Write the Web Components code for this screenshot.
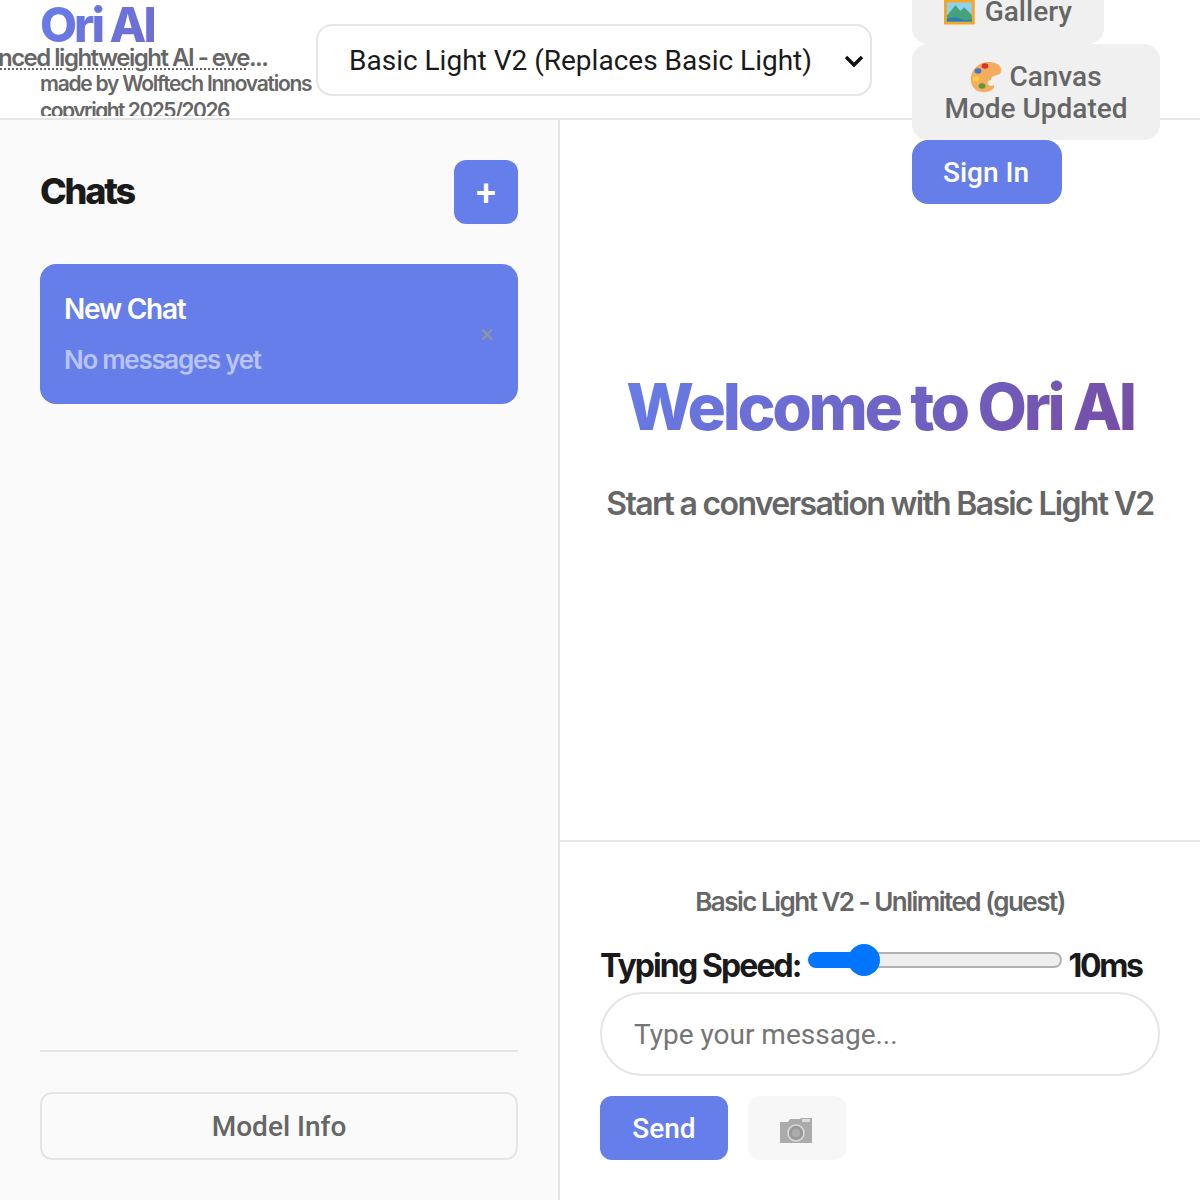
<!DOCTYPE html>
<html lang="en">
<head>
<meta charset="utf-8">
<title>Ori AI</title>
<style>
  html, body { margin: 0; height: 100%; overflow: hidden; background: #fff; }
  body { font-family: Roboto, "Liberation Sans", sans-serif; color: #1a1a1a; }
</style>
</head>
<body>
<ori-app>
  <ori-header slot="header"></ori-header>
  <ori-sidebar slot="sidebar"></ori-sidebar>
  <ori-chat slot="chat"></ori-chat>
</ori-app>

<script>
const headingFont = `Inter, "Liberation Sans", sans-serif`;
const uiFont = `Roboto, "Liberation Sans", sans-serif`;

const galleryIcon = `<svg width="32" height="26" viewBox="0 0 32 26" aria-hidden="true">
  <rect width="32" height="26" fill="#f5a623"/><rect x="3" y="3" width="26" height="20" fill="#8fd0ea"/>
  <path d="M3 17 L12 6 L17 12 L21 8 L29 16 V23 H3Z" fill="#45a27a"/>
  <path d="M3 20 Q12 17 17 20 T29 20 V23 H3Z" fill="#2f7fb5"/></svg>`;
const paletteIcon = `<svg width="32" height="32" viewBox="0 0 32 32" aria-hidden="true">
  <path d="M17 1 C27 0 33 6 31 11 C29 16 22 13 21 18 C20 23 27 24 23 28 C19 32 8 33 3 26 C-2 19 1 3 17 1Z" fill="#f4ad5f"/>
  <ellipse cx="15" cy="5" rx="3.4" ry="2.8" fill="#d8342c"/><ellipse cx="8" cy="10" rx="3.4" ry="2.8" fill="#3b78c9"/>
  <ellipse cx="6" cy="18" rx="3" ry="2.8" fill="#f7d23e"/><ellipse cx="12" cy="25" rx="3.4" ry="2.8" fill="#5a9a3c"/>
  <ellipse cx="21" cy="22" rx="3.4" ry="2.8" fill="#fbf3e2"/></svg>`;
const cameraIcon = `<svg width="32" height="26" viewBox="0 0 32 26" aria-hidden="true">
  <path d="M0 4 H8 L10 1 H20 L21 0 H32 V25 H0Z" fill="#ababab"/><rect x="22" y="1" width="8" height="3" fill="#dadada"/>
  <circle cx="16" cy="15" r="8" fill="#999" stroke="#d8d8d8" stroke-width="1.6"/><circle cx="16" cy="15" r="4" fill="#adadad"/></svg>`;
const selectArrow = `url("data:image/svg+xml,%3Csvg xmlns='http://www.w3.org/2000/svg' width='20' height='12' viewBox='0 0 20 12'%3E%3Cpath d='M2 2l8 8 8-8' fill='none' stroke='%23111' stroke-width='3.4'/%3E%3C/svg%3E")`;

class OriApp extends HTMLElement {
  constructor() {
    super();
    this.attachShadow({ mode: "open" });
    this.shadowRoot.innerHTML = `
    <style>
      :host { display: grid; grid-template-columns: 560px 1fr; grid-template-rows: 120px 1fr; height: 1200px; }
      ::slotted([slot="header"]) { grid-column: 1 / 3; }
    </style>
    <slot name="header"></slot>
    <slot name="sidebar"></slot>
    <slot name="chat"></slot>`;
  }
}

class OriHeader extends HTMLElement {
  constructor() {
    super();
    this.attachShadow({ mode: "open" });
    this.shadowRoot.innerHTML = `
    <style>
      :host { display: flex; height: 120px; box-sizing: border-box; border-bottom: 2px solid #e5e5e5; padding-left: 40px; gap: 40px; position: relative; z-index: 2; }
      .brand { width: 276px; flex: none; margin-right: -40px; font-family: ${headingFont}; clip-path: inset(-20px -20px 2px -100px); white-space: nowrap; }
      .logo { font-size: 48px; font-weight: 800; letter-spacing: -3px; line-height: 48px; margin-top: 1px; background: linear-gradient(135deg, #667eea 0, #6f6bd0 100%); -webkit-background-clip: text; background-clip: text; color: transparent; width: max-content; }
      .tag { font-size: 24px; font-weight: 600; color: #666; letter-spacing: -1.5px; line-height: 24px; margin: -3px 0 0 -96px; }
      .tag u { text-decoration: underline dotted 2px; text-underline-offset: 2px; }
      .by { font-size: 21px; font-weight: 600; color: #666; letter-spacing: -1.25px; line-height: 30px; margin-top: -1px; }
      .copy { font-size: 21px; font-weight: 600; color: #666; letter-spacing: -1.5px; line-height: 30px; margin-top: -3px; }
      select { flex: none; width: 556px; height: 72px; margin-top: 24px; box-sizing: border-box; border: 2px solid #e5e5e5; border-radius: 16px; color: #1a1a1a; font: 400 28px ${uiFont}; padding: 0 31px; appearance: none; -webkit-appearance: none; background: #fff ${selectArrow} no-repeat 526px 29px; }
      .actions { width: 248px; flex: none; margin-top: -20px; display: flex; flex-direction: column; align-items: flex-start; height: 224px; }
      button { font: 500 28px/32px ${uiFont}; border: 0; border-radius: 16px; padding: 0 32px; height: 64px; text-align: center; }
      .plain { background: #f0f0f0; color: #666; }
      .gallery { width: 192px; display: flex; gap: 10px; align-items: center; }
      .canvas { width: 248px; height: 96px; padding-top: 1px; }
      .canvas svg { vertical-align: -7px; }
      .signin { background: #667eea; color: #fff; width: 150px; padding: 2px 2px 0 0; }
    </style>
    <div class="brand">
      <div class="logo">Ori AI</div>
      <div class="tag"><u>Advanced lightweight AI - eve</u>...</div>
      <div class="by">made by Wolftech Innovations</div>
      <div class="copy">copyright 2025/2026</div>
    </div>
    <select><option>Basic Light V2 (Replaces Basic Light)</option></select>
    <div class="actions">
      <button class="plain gallery">${galleryIcon}<span>Gallery</span></button>
      <button class="plain canvas">${paletteIcon} Canvas Mode Updated</button>
      <button class="signin">Sign In</button>
    </div>`;
  }
}

class ChatCard extends HTMLElement {
  constructor() {
    super();
    this.attachShadow({ mode: "open" });
    this.shadowRoot.innerHTML = `
    <style>
      :host { display: flex; align-items: center; justify-content: space-between; height: 140px; box-sizing: border-box; padding: 0 24px; background: #667eea; border-radius: 16px; font-family: ${headingFont}; }
      .title { color: #fff; font-size: 28px; font-weight: 600; letter-spacing: -1.3px; line-height: 34px; margin-bottom: 18px; }
      .sub { color: #b9c4f6; font-size: 26px; font-weight: 600; letter-spacing: -1.3px; line-height: 32px; }
      .x { color: #8f93a8; font: 400 26px/24px ${uiFont}; width: 14px; text-align: center; }
    </style>
    <div><div class="title"><slot name="title"></slot></div><div class="sub"><slot name="sub"></slot></div></div>
    <span class="x">×</span>`;
  }
}

class OriSidebar extends HTMLElement {
  constructor() {
    super();
    this.attachShadow({ mode: "open" });
    this.shadowRoot.innerHTML = `
    <style>
      :host { display: flex; flex-direction: column; box-sizing: border-box; height: 1080px; padding: 40px 40px 40px; border-right: 2px solid #e5e5e5; background: #fafafa; }
      .top { display: flex; justify-content: space-between; align-items: center; height: 64px; margin-bottom: 40px; }
      h2 { margin: -2px 0 0; font: 800 36px/40px ${headingFont}; letter-spacing: -2.2px; color: #1a1a1a; }
      .add { width: 64px; height: 64px; border: 0; border-radius: 12px; background: #667eea; color: #fff; font: 500 36px/64px ${uiFont}; padding: 2px 0 0; }
      .list { flex: 1; }
      .foot { border-top: 2px solid #e5e5e5; padding-top: 40px; }
      .info { width: 100%; height: 68px; box-sizing: border-box; border: 2px solid #e5e5e5; border-radius: 12px; background: transparent; color: #666; font: 500 28px ${uiFont}; }
    </style>
    <div class="top"><h2>Chats</h2><button class="add">+</button></div>
    <div class="list">
      <chat-card><span slot="title">New Chat</span><span slot="sub">No messages yet</span></chat-card>
    </div>
    <div class="foot"><button class="info">Model Info</button></div>`;
  }
}

class SpeedSlider extends HTMLElement {
  constructor() {
    super();
    this.attachShadow({ mode: "open" });
    this.shadowRoot.innerHTML = `
    <style>
      :host { display: flex; align-items: center; width: 254px; height: 32px; flex: none; }
      .fill { width: 44px; height: 16px; background: #0075ff; border-radius: 8px 0 0 8px; flex: none; }
      .thumb { width: 32px; height: 32px; background: #0075ff; border-radius: 50%; margin: 0 -12px 0 -4px; flex: none; position: relative; }
      .rest { flex: 1; height: 16px; box-sizing: border-box; border: 2px solid #b2b2b2; border-left: 0; border-radius: 0 8px 8px 0; background: #efefef; }
    </style>
    <div class="fill"></div><div class="thumb"></div><div class="rest"></div>`;
  }
}

class OriChat extends HTMLElement {
  constructor() {
    super();
    this.attachShadow({ mode: "open" });
    this.shadowRoot.innerHTML = `
    <style>
      :host { display: flex; flex-direction: column; height: 1080px; }
      .welcome { height: 722px; box-sizing: border-box; border-bottom: 2px solid #e5e5e5; padding-top: 249px; text-align: center; font-family: ${headingFont}; }
      h1 { margin: 0 auto 39px; font-size: 64px; line-height: 76px; font-weight: 800; letter-spacing: -3.35px; background: linear-gradient(135deg, #667eea, #764ba2); -webkit-background-clip: text; background-clip: text; color: transparent; width: max-content; }
      p { margin: 0; font-size: 32px; line-height: 40px; font-weight: 600; color: #666; letter-spacing: -1.68px; white-space: nowrap; }
      .input { padding: 40px 40px 0; }
      .status { text-align: center; font: 600 26px/40px ${headingFont}; letter-spacing: -1.5px; color: #666; }
      .speed { display: flex; align-items: center; gap: 7px; height: 52px; margin-top: 18px; font: 700 32px/52px ${headingFont}; letter-spacing: -1.9px; color: #1a1a1a; white-space: nowrap; }
      .speed speed-slider { margin-top: -12px; }
      .ms { letter-spacing: -2.4px; }
      input { display: block; width: 100%; height: 84px; box-sizing: border-box; border: 2px solid #e5e5e5; border-radius: 42px; padding: 0 32px; font: 400 28px ${uiFont}; outline: 0; background: #fff; }
      input::placeholder { color: #757575; opacity: 1; }
      .btns { display: flex; gap: 20px; margin-top: 20px; }
      button { height: 64px; border: 0; border-radius: 12px; font: 500 28px ${uiFont}; padding: 0; }
      .send { width: 128px; background: #667eea; color: #fff; }
      .cam { width: 98px; background: #f7f7f7; display: flex; align-items: center; justify-content: center; padding: 6px 2px 0 0; }
    </style>
    <div class="welcome">
      <h1>Welcome to Ori AI</h1>
      <p>Start a conversation with Basic Light V2</p>
    </div>
    <div class="input">
      <div class="status">Basic Light V2 - Unlimited (guest)</div>
      <div class="speed"><span>Typing Speed:</span><speed-slider></speed-slider><span class="ms">10ms</span></div>
      <input type="text" placeholder="Type your message...">
      <div class="btns"><button class="send">Send</button><button class="cam">${cameraIcon}</button></div>
    </div>`;
  }
}

customElements.define("ori-app", OriApp);
customElements.define("ori-header", OriHeader);
customElements.define("chat-card", ChatCard);
customElements.define("ori-sidebar", OriSidebar);
customElements.define("speed-slider", SpeedSlider);
customElements.define("ori-chat", OriChat);
</script>
</body>
</html>
